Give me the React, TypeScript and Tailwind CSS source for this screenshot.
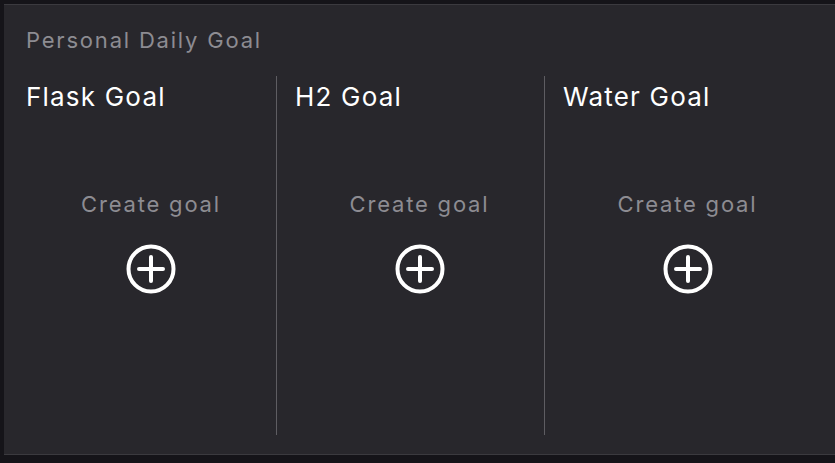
import React from 'react';

const goals = ['Flask Goal', 'H2 Goal', 'Water Goal'];

const PlusCircle: React.FC = () => (
    <svg width="50" height="50" viewBox="0 0 50 50" fill="none">
        <circle cx="25" cy="25" r="22.5" stroke="white" strokeWidth="4" />
        <path d="M25 13v24M13 25h24" stroke="white" strokeWidth="4" strokeLinecap="round" />
    </svg>
);

const App: React.FC = () => {
    return (
        <div
            className="h-[463px] w-[835px] overflow-hidden bg-[#151419] pt-[4px] pl-[4px]"
            style={{ fontFamily: 'Inter, "Noto Sans", sans-serif' }}
        >
            <div className="h-[451px] border-t border-b border-[#3b3a3f] bg-[#28272c]">
                <div className="pt-[23px] pl-[22px] text-[22px] leading-[24px] tracking-[1.8px] text-[#8d8c92]">
                    Personal Daily Goal
                </div>
                <div className="mt-[24px] flex pl-[4px]">
                    {goals.map((g, i) => (
                        <div
                            key={g}
                            className={`h-[359px] w-[268px] shrink-0 pl-[18px] ${i > 0 ? 'border-l border-[#5e5d62]' : ''}`}
                        >
                            <div className="pt-[6px] text-[26px] leading-[30px] tracking-[1.2px] text-white">{g}</div>
                            <div className="mt-[80px] flex flex-col items-center">
                                <div className="text-[22px] leading-[24px] tracking-[1.8px] text-[#8d8c92]">Create goal</div>
                                <div className="mt-[28px]">
                                    <PlusCircle />
                                </div>
                            </div>
                        </div>
                    ))}
                </div>
            </div>
        </div>
    );
};

export default App;
